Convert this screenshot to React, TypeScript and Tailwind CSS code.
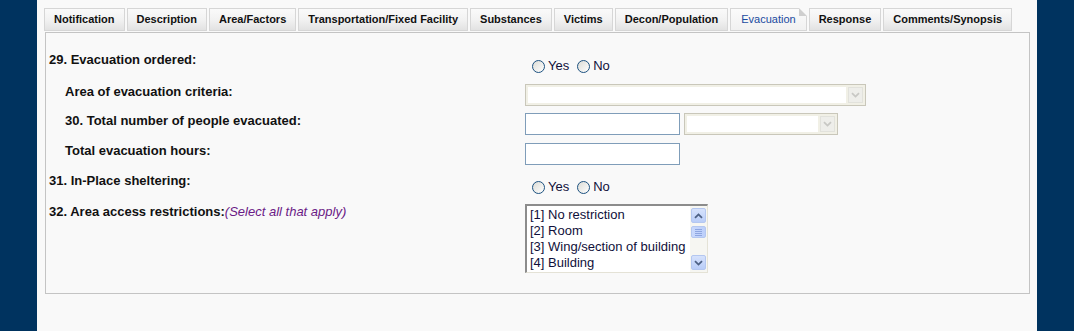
import { ReactNode } from 'react';

const tabs = [
  'Notification',
  'Description',
  'Area/Factors',
  'Transportation/Fixed Facility',
  'Substances',
  'Victims',
  'Decon/Population',
  'Evacuation',
  'Response',
  'Comments/Synopsis',
];

const Chevron = ({ up = false, color = '#4d6185' }: { up?: boolean; color?: string }) => (
  <svg width="9" height="6" viewBox="0 0 9 6" className={up ? 'rotate-180' : ''}>
    <path d="M1 1.2 L4.5 4.6 L8 1.2" fill="none" stroke={color} strokeWidth="1.8" />
  </svg>
);

const Radio = ({ label }: { label: string }) => (
  <label className="flex items-center">
    <span className="w-[13px] h-[13px] rounded-full border border-[#1c5180] bg-gradient-to-br from-[#dcdcd6] to-white" />
    <span className="ml-[3px] text-[13px] leading-[16px] text-[#10103a]">{label}</span>
  </label>
);

const YesNo = () => (
  <div className="flex items-center gap-[8px] ml-[7px]">
    <Radio label="Yes" />
    <Radio label="No" />
  </div>
);

const DisabledSelect = ({ width }: { width: string }) => (
  <div className={`${width} h-[22px] border border-[#c9c7ba] bg-[#f1f0e6] p-[2px] flex gap-[2px]`}>
    <div className="flex-1 bg-white" />
    <div className="w-[15px] bg-[#eeeeea] border border-[#e2e2dc] flex items-center justify-center">
      <Chevron color="#c8c8c4" />
    </div>
  </div>
);

const TextInput = () => <div className="w-[155px] h-[22px] border border-[#7f9db9] bg-white" />;

const Row = ({ label, indent = false, children, className = '' }: { label: ReactNode; indent?: boolean; children?: ReactNode; className?: string }) => (
  <div className={`flex items-start ${className}`}>
    <div className={`w-[476px] shrink-0 text-[13px] leading-[16px] font-bold text-[#111] ${indent ? 'pl-[16px]' : ''}`}>
      {label}
    </div>
    <div>{children}</div>
  </div>
);

const ScrollBtn = ({ up }: { up?: boolean }) => (
  <div className="h-[15px] w-[15px] rounded-[2px] border border-[#b4c7f0] bg-gradient-to-b from-[#d6e2fc] to-[#b9cdf8] flex items-center justify-center">
    <Chevron up={up} />
  </div>
);

const ListBox = () => (
  <div className="w-[183px] h-[69px] border-t-2 border-l-2 border-r border-b border-t-[#8c8c8c] border-l-[#8c8c8c] border-r-[#e4e2d6] border-b-[#e4e2d6] bg-white flex">
    <div className="flex-1 pl-[3px] pt-[1px] text-[13px] leading-[16px] text-[#10103a] whitespace-nowrap overflow-hidden">
      <div>[1] No restriction</div>
      <div>[2] Room</div>
      <div>[3] Wing/section of building</div>
      <div>[4] Building</div>
    </div>
    <div className="w-[17px] bg-[#f6f6f2] flex flex-col items-center justify-between py-[2px]">
      <div className="flex flex-col gap-[3px]">
        <ScrollBtn up />
        <div className="h-[12px] w-[15px] rounded-[2px] border border-[#b4c7f0] bg-gradient-to-r from-[#c8d8fc] to-[#bccffa] flex flex-col items-center justify-center gap-[1px]">
          <div className="w-[7px] h-px bg-[#8ea6e0]" />
          <div className="w-[7px] h-px bg-[#8ea6e0]" />
          <div className="w-[7px] h-px bg-[#8ea6e0]" />
          <div className="w-[7px] h-px bg-[#8ea6e0]" />
        </div>
      </div>
      <ScrollBtn />
    </div>
  </div>
);

export default function App() {
  return (
    <div className="w-[1074px] h-[331px] bg-[#00335f] flex font-['Liberation_Sans',Arial,sans-serif]">
      <div className="w-[37px] shrink-0" />
      <div className="w-[1000px] bg-[#f9f9f9] pl-[7px] pt-[8px]">
        <div className="flex gap-[2px] h-[23px]">
          {tabs.map((t) => {
            const active = t === 'Evacuation';
            return (
              <div
                key={t}
                className={`relative h-[23px] border border-[#d6d6d6] flex items-center text-[11px] ${
                  active
                    ? 'px-[10px] bg-gradient-to-b from-[#fbfbfb] to-[#f1f1f1] text-[#1a4aa0]'
                    : 'px-[9px] font-bold bg-gradient-to-b from-[#fafafa] via-[#f2f2f2] to-[#e2e2e2] text-[#111]'
                }`}
              >
                <span>{t}</span>
                {active && (
                  <span className="absolute -top-px -right-px w-0 h-0 border-t-[8px] border-l-[8px] border-t-[#f9f9f9] border-l-[#cfcfcf]" />
                )}
              </div>
            );
          })}
        </div>
        <div className="mt-px ml-px w-[985px] h-[262px] border border-[#c4c4c4] pl-[3px] pt-[19px] flex flex-col">
          <Row label="29. Evacuation ordered:" className="h-[32px]">
            <div className="mt-[6px]">
              <YesNo />
            </div>
          </Row>
          <Row label="Area of evacuation criteria:" indent className="h-[29px]">
            <DisabledSelect width="w-[341px]" />
          </Row>
          <Row label="30. Total number of people evacuated:" indent className="h-[30px]">
            <div className="flex gap-[4px]">
              <TextInput />
              <DisabledSelect width="w-[154px]" />
            </div>
          </Row>
          <Row label="Total evacuation hours:" indent className="h-[30px]">
            <TextInput />
          </Row>
          <Row label="31. In-Place sheltering:" className="h-[31px]">
            <div className="mt-[6px]">
              <YesNo />
            </div>
          </Row>
          <Row
            label={
              <>
                32. Area access restrictions:
                <span className="italic font-normal text-[#6b1a86]">(Select all that apply)</span>
              </>
            }
          >
            <ListBox />
          </Row>
        </div>
      </div>
    </div>
  );
}
